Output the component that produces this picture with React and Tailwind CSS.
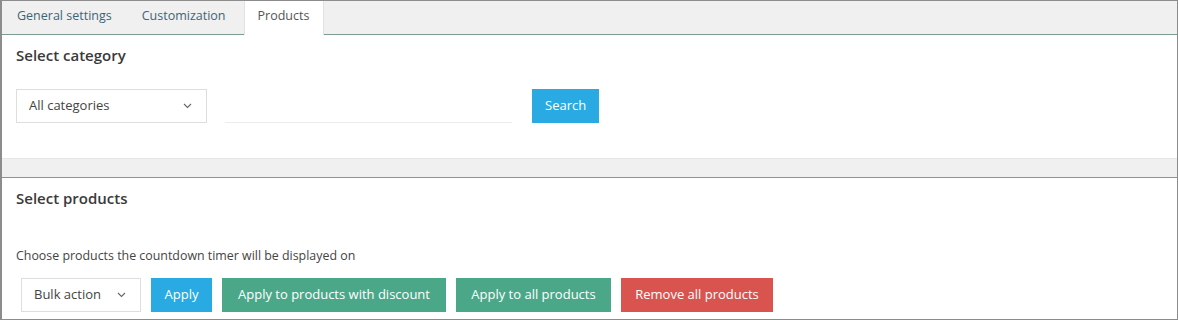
import React from 'react';

const font = { fontFamily: '"Open Sans", "Noto Sans", sans-serif' };

function Chevron() {
  return (
    <svg width="9" height="6" viewBox="0 0 9 6" fill="none" stroke="#666" strokeWidth="1.1">
      <path d="M1 1l3.5 3.5L8 1" />
    </svg>
  );
}

function App() {
  const tabs = ['General settings', 'Customization', 'Products'];

  return (
    <div className="w-[1178px] h-[320px] bg-white border border-[#8c8c8c] border-l-2 flex flex-col overflow-hidden text-[13px] text-[#333]" style={font}>
      {/* tabs */}
      <div className="h-[34px] bg-[#f0f0f0] border-b border-[#7d9b93] flex items-stretch shrink-0 text-[12.5px]">
        {tabs.map((t) => (
          <div
            key={t}
            className={
              t === 'Products'
                ? 'flex items-center justify-center pb-[3px] bg-white border-x border-[#e2e2e2] text-[#555] -mb-px ml-[3px] w-[80px]'
                : 'px-[15px] flex items-center pb-[3px] text-[#3b6678]'
            }
          >
            {t}
          </div>
        ))}
      </div>

      {/* select category */}
      <div className="h-[123px] shrink-0 px-[14px] pt-[9px]">
        <h2 className="text-[15px] font-semibold text-[#3a3a3a] leading-[22px]">Select category</h2>
        <div className="flex items-center mt-[23px]">
          <div className="w-[191px] h-[34px] border border-[#dedede] flex items-center justify-between pl-[12px] pr-[14px] text-[#444]">
            <span>All categories</span>
            <Chevron />
          </div>
          <div className="ml-[18px] w-[287px] h-[34px] border-b border-[#ececec]" />
          <button className="ml-[20px] h-[34px] px-[13px] bg-[#29aae2] text-white">Search</button>
        </div>
      </div>

      {/* gray band */}
      <div className="h-[20px] bg-[#f0f0f0] border-t border-[#e6e6e6] border-b border-b-[#7d9b93] shrink-0" />

      {/* select products */}
      <div className="flex-1 px-[14px] pt-[9px]">
        <h2 className="text-[15px] font-semibold text-[#3a3a3a] leading-[22px]">Select products</h2>
        <p className="mt-[38px] text-[12.4px] text-[#444] leading-[18px]">Choose products the countdown timer will be displayed on</p>
        <div className="flex items-center gap-[10px] mt-[13px] ml-[5px]">
          <div className="w-[120px] h-[34px] border border-[#dedede] flex items-center justify-between pl-[12px] pr-[14px] text-[#444]">
            <span>Bulk action</span>
            <Chevron />
          </div>
          <button className="h-[34px] w-[61px] bg-[#29aae2] text-white">Apply</button>
          <button className="h-[34px] w-[224px] bg-[#4aa889] text-white">Apply to products with discount</button>
          <button className="h-[34px] w-[155px] bg-[#4aa889] text-white">Apply to all products</button>
          <button className="h-[34px] w-[152px] bg-[#d9534f] text-white">Remove all products</button>
        </div>
      </div>
    </div>
  );
}

export default App;
